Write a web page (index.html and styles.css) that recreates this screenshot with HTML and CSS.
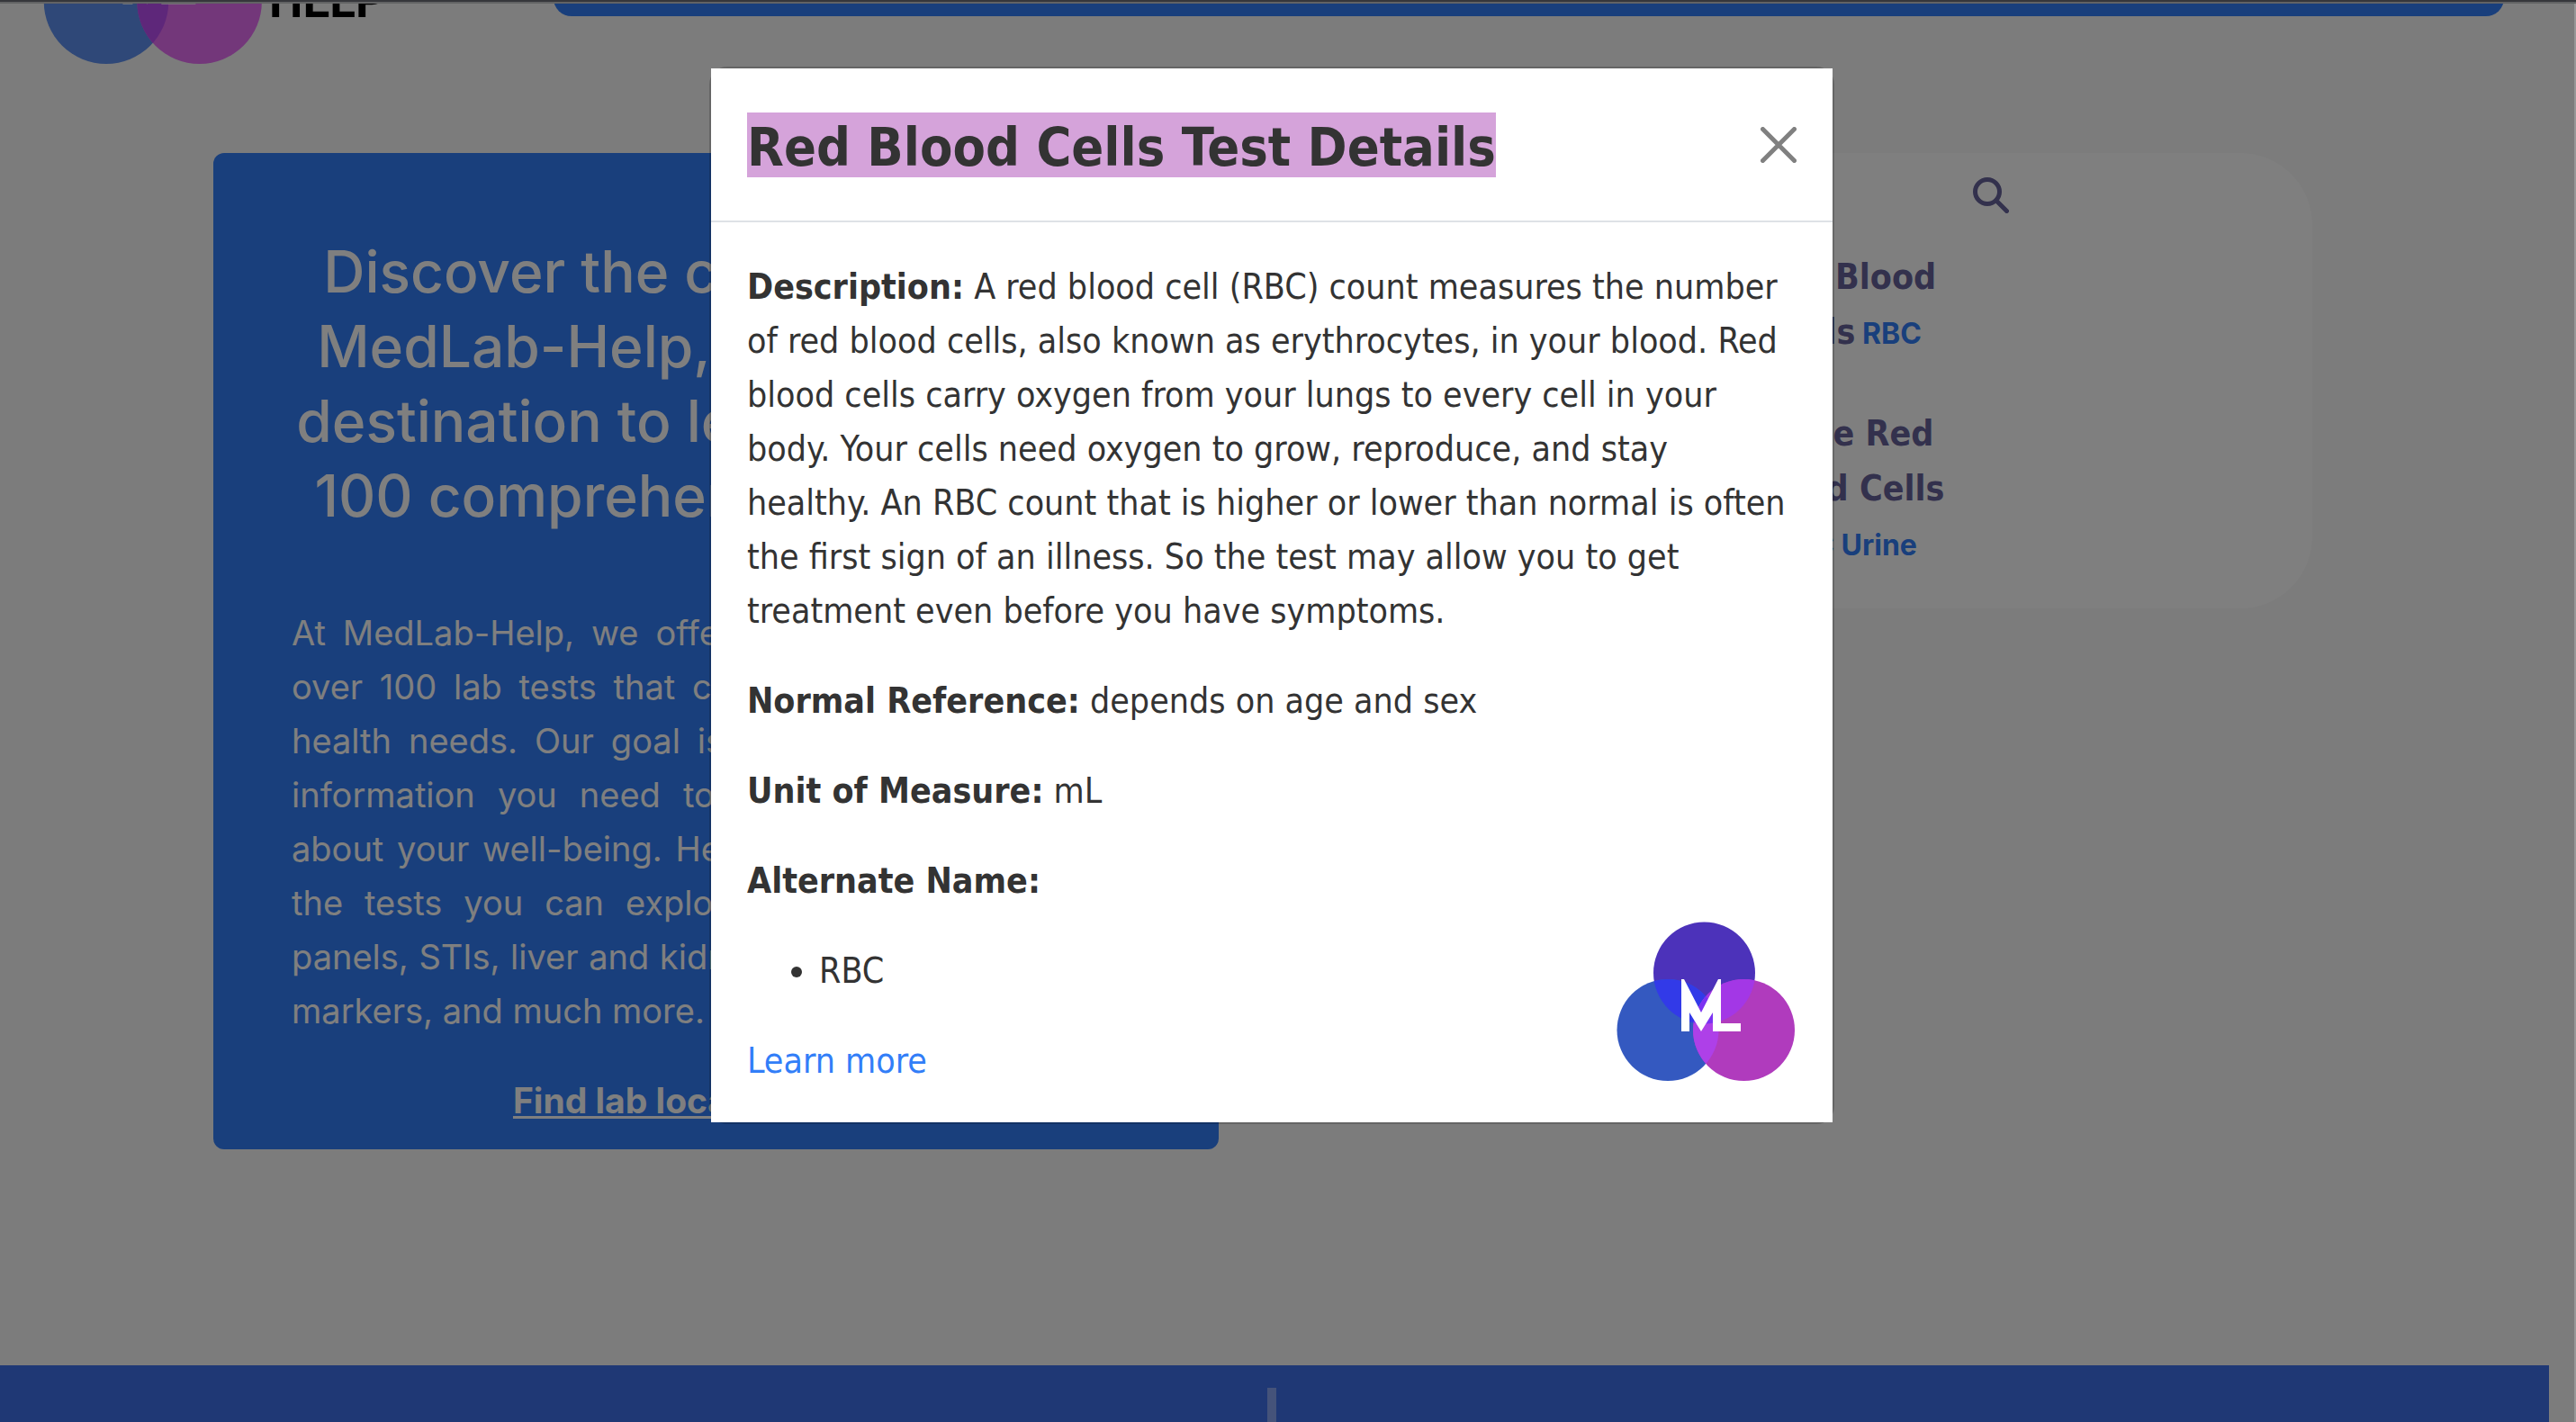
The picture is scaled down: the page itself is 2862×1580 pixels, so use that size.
FILE: index.html
```html
<!DOCTYPE html>
<html lang="en">
<head>
<meta charset="utf-8">
<meta name="viewport" content="width=device-width, initial-scale=1">
<title>MedLab-Help</title>
<link rel="stylesheet" href="styles.css">
</head>
<body>
<svg class="defs" aria-hidden="true">
  <defs>
    <clipPath id="clip-top"><circle cx="97.500" cy="57" r="56.500"/></clipPath>
    <clipPath id="clip-left"><circle cx="57" cy="120.500" r="56.500"/></clipPath>
  </defs>
</svg>

<div class="window-edge"></div>

<header class="site-header">
  <a class="brand" href="#" aria-label="MedLab Help home">
    <svg class="brand-mark" viewBox="0 0 198 177" aria-hidden="true">
      <circle cx="97.500" cy="57" r="56.500" fill="#7a60f0"/>
      <circle cx="57" cy="120.500" r="56.500" fill="#5f90f0"/>
      <circle cx="141.500" cy="120.500" r="56.500" fill="#e66ef4"/>
      <circle cx="141.500" cy="120.500" r="56.500" fill="#bd4ef5" clip-path="url(#clip-left)"/>
      <path fill="#fff" d="M72 123V64h3L94 97 113 64h3V113h22v10H107V101L94 123 81 101V123Z"/>
    </svg>
    <span class="brand-name">HELP</span>
  </a>
  <nav class="site-nav" aria-label="Main"></nav>
</header>

<main class="page">
  <section class="intro">
    <h1>Discover the convenience of<br>MedLab-Help, your one-stop<br>destination to learn about over<br>100 comprehensive lab tests.</h1>
    <p class="intro-text">At MedLab-Help, we offer detailed information for<br>over 100 lab tests that can help you identify your<br>health needs. Our goal is to provide you with the<br>information you need to make informed choices<br>about your well-being. Here are just some types of<br>the tests you can explore, including biochemical<br>panels, STIs, liver and kidney function, some cancer<br><span class="last-line">markers, and much more.</span></p>
    <a class="intro-link" href="#">Find lab locations today</a>
  </section>

  <section class="search-card">
    <form class="search">
      <input class="search-input" type="text" aria-label="Search tests">
      <button class="search-button" type="button" aria-label="Search">
        <svg viewBox="0 0 40 40" aria-hidden="true"><g fill="none" stroke="currentColor" stroke-width="5" stroke-linecap="round"><circle cx="16" cy="16" r="13.500"/><path d="M26 26 37.500 37.500"/></g></svg>
      </button>
    </form>
    <ul class="results">
      <li>Red Blood Cells<small> RBC</small></li>
      <li>Urine Red Blood Cells<small> RBC Urine</small></li>
    </ul>
  </section>
</main>

<footer class="site-footer"><div class="footer-divider"></div></footer>

<div class="backdrop">
  <div class="modal" role="dialog" aria-modal="true" aria-labelledby="modal-title">
    <div class="modal-header">
      <h2 id="modal-title"><mark>Red Blood Cells Test Details</mark></h2>
      <button class="close" type="button" aria-label="Close">
        <svg viewBox="0 0 40 40" aria-hidden="true"><path fill="none" stroke="currentColor" stroke-width="5" stroke-linecap="round" d="M2.500 2.500 37.500 37.500M37.500 2.500 2.500 37.500"/></svg>
      </button>
    </div>
    <div class="modal-body">
      <p><strong>Description:</strong> A red blood cell (RBC) count measures the number of red blood cells, also known as erythrocytes, in your blood. Red blood cells carry oxygen from your lungs to every cell in your body. Your cells need oxygen to grow, reproduce, and stay healthy. An RBC count that is higher or lower than normal is often the first sign of an illness. So the test may allow you to get treatment even before you have symptoms.</p>
      <p><strong>Normal Reference:</strong> depends on age and sex</p>
      <p><strong>Unit of Measure:</strong> mL</p>
      <p><strong>Alternate Name:</strong></p>
      <ul><li>RBC</li></ul>
      <a class="learn-more" href="#">Learn more</a>
      <svg class="modal-logo" viewBox="0 0 198 177" role="img" aria-label="ML logo">
        <circle cx="97.500" cy="57" r="56.500" fill="#4c32ba"/>
        <circle cx="57" cy="120.500" r="56.500" fill="#3459c0"/>
        <circle cx="141.500" cy="120.500" r="56.500" fill="#b03bbd"/>
        <circle cx="57" cy="120.500" r="56.500" fill="#323ae8" clip-path="url(#clip-top)"/>
        <circle cx="141.500" cy="120.500" r="56.500" fill="#a337e6" clip-path="url(#clip-top)"/>
        <circle cx="141.500" cy="120.500" r="56.500" fill="#ae40e8" clip-path="url(#clip-left)"/>
        <g clip-path="url(#clip-top)"><circle cx="141.500" cy="120.500" r="56.500" fill="#7b32f2" clip-path="url(#clip-left)"/></g>
        <path fill="#fff" d="M72 122V64h3L94 101 113 64h3V113h22v9H107V101L94 122 81 101V122Z"/>
      </svg>
    </div>
  </div>
</div>
<div class="window-side"></div>
</body>
</html>
```
FILE: styles.css
```css
*{box-sizing:border-box}
html{height:100%;overflow:hidden;background:#f8f8f8}
body{
  margin:0;
  height:100%;
  display:flex;
  flex-direction:column;
  font-family:Inter,sans-serif;
  overflow:hidden;
}
h1,h2,p,ul{margin:0;padding:0}
button{border:0;padding:0;background:none;cursor:pointer}
svg{display:block}
.defs{position:absolute;width:0;height:0}

.window-edge{
  position:relative;
  z-index:3;
  flex:none;
  height:4px;
  background:#626364;
  border-top:2px solid #36373b;
}
.window-side{
  position:absolute;
  z-index:2;
  top:4px;
  right:0;
  bottom:0;
  width:2px;
  background:#979797;
}

.site-header{
  flex:none;
  display:flex;
  align-items:flex-start;
  justify-content:space-between;
  margin-top:-150px;
  padding:0 80px 0 48px;
}
.brand{display:flex;gap:8px;color:#000;text-decoration:none}
.brand-mark{width:243px;height:217px}
.brand-name{
  margin-top:119px;
  font:700 53px/56px Roboto,sans-serif;
}
.site-nav{
  width:calc(78% + 60px);
  max-width:2167px;
  height:120px;
  margin-top:44px;
  background:#327ef8;
  border-radius:20px;
}

.page{
  flex:none;
  display:grid;
  grid-template-columns:1117fr 1034fr;
  column-gap:181px;
  align-items:start;
  padding:99px 293px 240px 237px;
}
.intro{
  display:flex;
  flex-direction:column;
  align-items:center;
  padding:90px 87px 24px;
  border-radius:12px;
  background:#327ef8;
  color:#fff;
  white-space:nowrap;
}
h1{
  font-size:64px;
  font-weight:500;
  line-height:83px;
  text-align:center;
}
.intro-text{
  align-self:stretch;
  margin:81px 0 40px;
  font-size:38px;
  line-height:60px;
  white-space:normal;
  text-align:justify;
  text-align-last:justify;
}
.last-line{display:block;text-align-last:left}
.intro-link{
  font-size:39px;
  font-weight:700;
  line-height:60px;
  color:#fff;
  text-decoration:underline;
  text-decoration-thickness:3px;
  text-underline-offset:3px;
}

.search-card{
  min-height:506px;
  padding:27px 80px 30px;
  border-radius:80px;
  background:#fff;
  color:#67639a;
}
.search{
  display:flex;
  justify-content:center;
  gap:10px;
  height:40px;
}
.search-input{width:310px;border:0;background:none;font:32px Inter,sans-serif}
.search-button{width:40px;height:40px;color:#67639a}
.results{
  width:240px;
  margin:40px auto 0;
  padding-right:2px;
  list-style:none;
  font:bold 39px/61px "DejaVu Sans Condensed","DejaVu Sans",sans-serif;
  text-align:center;
}
.results li + li{margin-top:52px}
.results small{
  font:bold 32px/32px Inter,sans-serif;
  color:#327ef8;
}

.site-footer{
  flex:1;
  display:flex;
  justify-content:center;
  margin-right:30px;
  padding:25px 6px 0 0;
  background:#3e70ea;
}
.footer-divider{width:10px;background:#8aa6f4}

.backdrop{
  position:fixed;
  z-index:1;
  inset:4px 0 0;
  display:flex;
  justify-content:center;
  align-items:flex-start;
  padding:70px 36px 0 0;
  background:rgba(0,0,0,.5);
}
.modal{
  width:1250px;
  max-width:90%;
  border:2px solid rgba(0,0,0,.18);
  border-radius:20px;
  color:#333;
  font:39px/60px "DejaVu Sans Condensed","DejaVu Sans",sans-serif;
}
.modal-header{
  display:flex;
  justify-content:space-between;
  align-items:center;
  height:171px;
  padding:0 40px;
  border-bottom:2px solid #dee2e6;
  background:#fff;
}
.modal-header h2{font-size:59px}
mark{
  display:block;
  height:72px;
  line-height:78px;
  background:#d5a3da;
  color:inherit;
}
.close{width:40px;height:40px;color:#808080}
.modal-body{
  position:relative;
  display:flex;
  flex-direction:column;
  align-items:flex-start;
  gap:40px;
  padding:42px 40px 38px;
  background:#fff;
}
.modal-body ul{padding-left:80px}
.learn-more{color:#327ef8;text-decoration:none}
.modal-logo{
  position:absolute;
  right:42px;
  bottom:46px;
  width:198px;
  height:177px;
}
```
